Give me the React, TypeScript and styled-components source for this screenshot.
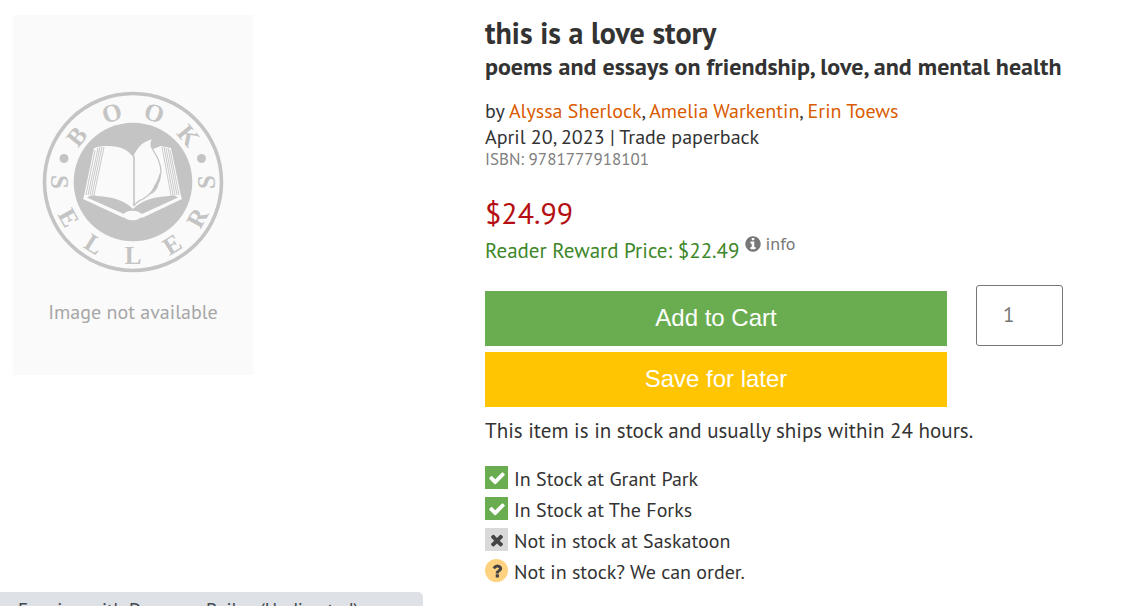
import React from 'react';
import styled, { createGlobalStyle } from 'styled-components';

const GlobalStyle = createGlobalStyle`
  *, *::before, *::after { box-sizing: border-box; }
  body {
    margin: 0;
    background: #fff;
    color: #333;
    font-family: 'PT Sans', Lato, 'Noto Sans', sans-serif;
    font-size: 20px;
    line-height: 26px;
  }
`;

const Page = styled.main`
  display: grid;
  grid-template-columns: minmax(0, 472fr) minmax(0, 578fr);
  padding: 15px 59px 20px 13px;
`;

const Cover = styled.figure`
  display: flex;
  flex-direction: column;
  align-items: center;
  width: 240px;
  height: 360px;
  margin: 0;
  padding-top: 76px;
  background: #fafafa;
`;

const Emblem = styled.svg`
  display: block;
  width: 182px;
  height: 182px;
`;

const CoverCaption = styled.figcaption`
  margin-top: 26px;
  color: #a6a6a6;
  font-size: 20px;
`;

const Details = styled.section`
  min-width: 0;
`;

const Title = styled.h1`
  margin: 0;
  font-size: 30px;
  line-height: 36px;
`;

const Subtitle = styled.h2`
  margin: 0 0 15px;
  font-size: 24px;
  line-height: 32px;
  white-space: nowrap;
`;

const Line = styled.p`
  margin: 0;
  white-space: nowrap;
`;

const AuthorLink = styled.a`
  color: #d95b00;
  text-decoration: none;
`;

const Isbn = styled.p`
  margin: 0;
  color: #808080;
  font-size: 17px;
  line-height: 18px;
`;

const Price = styled.p`
  margin: 26px 0 0;
  color: #b50e12;
  font-size: 30px;
  line-height: 38px;
`;

const RewardRow = styled.div`
  display: flex;
  gap: 5px;
  height: 36px;
  color: #3d8728;
  font-size: 21px;
  line-height: 38px;
  white-space: nowrap;
`;

const InfoLink = styled.a`
  display: inline-flex;
  align-items: center;
  gap: 3px;
  height: 24px;
  color: #777;
  font-size: 18px;
  line-height: 24px;
  text-decoration: none;
`;

const Purchase = styled.form`
  display: flex;
  align-items: flex-start;
  gap: 29px;
  margin-top: 17px;
`;

const Actions = styled.div`
  display: flex;
  flex: 1;
  flex-direction: column;
  gap: 6px;
  padding-top: 6px;
`;

const ActionButton = styled.button<{ $color: string }>`
  height: 55px;
  padding: 0 0 2px;
  border: 0;
  background: ${({ $color }) => $color};
  color: #fff;
  font-family: 'Liberation Sans', Arial, sans-serif;
  font-size: 24px;
  cursor: pointer;
`;

const Quantity = styled.input`
  width: 87px;
  height: 61px;
  padding: 0 26px 2px;
  border: 1px solid #767676;
  border-radius: 3px;
  background: #fff;
  color: #777;
  font: inherit;
  font-size: 21px;
`;

const Shipping = styled.p`
  margin: 11px 0 22px;
  font-size: 21px;
  white-space: nowrap;
`;

const StockList = styled.ul`
  display: flex;
  flex-direction: column;
  gap: 8px;
  margin: 0;
  padding: 0;
  list-style: none;
`;

const StockItem = styled.li`
  display: flex;
  align-items: flex-start;
  gap: 6px;
  height: 23px;
  line-height: 26px;
`;

const Badge = styled.span<{ $background: string; $color: string; $round?: boolean }>`
  display: flex;
  align-items: center;
  justify-content: center;
  width: 23px;
  height: 23px;
  border-radius: ${({ $round }) => ($round ? '50%' : '0')};
  background: ${({ $background }) => $background};
  color: ${({ $color }) => $color};
`;

const Glyph = styled.svg`
  display: block;
  fill: currentColor;
`;

const StatusBubble = styled.aside`
  position: fixed;
  bottom: 0;
  left: 0;
  width: 423px;
  height: 14px;
  padding: 6px 18px 0;
  overflow: hidden;
  border-top-right-radius: 5px;
  background: #dee1e5;
  color: #444950;
  font-size: 19px;
  line-height: 24px;
  white-space: nowrap;
`;

const glyphs = {
  check:
    'M1671 566q0 40-28 68l-724 724-136 136q-28 28-68 28t-68-28l-136-136-362-362q-28-28-28-68t28-68l136-136q28-28 68-28t68 28l294 295 656-657q28-28 68-28t68 28l136 136q28 28 28 68z',
  times:
    'M1490 1322q0 40-28 68l-136 136q-28 28-68 28t-68-28l-294-294-294 294q-28 28-68 28t-68-28l-136-136q-28-28-28-68t28-68l294-294-294-294q-28-28-28-68t28-68l136-136q28-28 68-28t68 28l294 294 294-294q28-28 68-28t68 28l136 136q28 28 28 68t-28 68l-294 294 294 294q28 28 28 68z',
  question:
    'M1088 1256v240q0 16-12 28t-28 12h-240q-16 0-28-12t-12-28v-240q0-16 12-28t28-12h240q16 0 28 12t12 28zm316-600q0 54-15.5 101t-35 76.5-55 59.5-57.5 43.5-61 35.5q-41 23-68.5 65t-27.5 67q0 17-12 32.5t-28 15.5h-240q-15 0-25.5-18.5t-10.5-37.5v-45q0-83 65-156.5t143-108.5q59-27 84-56t25-76q0-42-46.5-74t-107.5-32q-65 0-108 29-35 25-107 115-13 16-31 16-12 0-25-8l-164-125q-13-10-15.5-25t5.5-28q160-266 464-266 80 0 161 31t146 83 106 127.5 41 158.5z',
  info:
    'M1152 1376v-160q0-14-9-23t-23-9h-96v-512q0-14-9-23t-23-9h-320q-14 0-23 9t-9 23v160q0 14 9 23t23 9h96v320h-96q-14 0-23 9t-9 23v160q0 14 9 23t23 9h448q14 0 23-9t9-23zm-128-896v-160q0-14-9-23t-23-9h-192q-14 0-23 9t-9 23v160q0 14 9 23t23 9h192q14 0 23-9t9-23zm640 416q0 209-103 385.5t-279.5 279.5-385.5 103-385.5-103-279.5-279.5-103-385.5 103-385.5 279.5-279.5 385.5-103 385.5 103 279.5 279.5 103 385.5z',
};

function Icon({ name, size }: { name: keyof typeof glyphs; size: number }) {
  return (
    <Glyph viewBox="0 0 1792 1792" width={size} height={size} aria-hidden="true">
      <path d={glyphs[name]} />
    </Glyph>
  );
}

// Letters of the emblem: angle is measured from the top for BOOK, from the bottom for SELLERS.
const topLetters: [string, number][] = [['B', -51], ['O', -17], ['O', 17], ['K', 50]];
const bottomLetters: [string, number][] = [
  ['S', 90], ['E', 61], ['L', 32], ['L', 0], ['E', -32], ['R', -61], ['S', -90],
];

function BooksellersEmblem() {
  return (
    <Emblem viewBox="-91 -91 182 182" role="img" aria-label="Booksellers">
      <circle r="88.5" fill="none" stroke="#c4c4c4" strokeWidth="3.6" />
      <circle r="59.3" fill="#c4c4c4" />
      <circle cx="-69" cy="-23.5" r="4.5" fill="#c4c4c4" />
      <circle cx="68.5" cy="-23.5" r="4.5" fill="#c4c4c4" />
      <g
        fill="#c4c4c4"
        fontFamily="'Liberation Serif', serif"
        fontSize="25"
        fontWeight="700"
        textAnchor="middle"
      >
        {topLetters.map(([letter, angle]) => (
          <text key={angle} y="-64" transform={`rotate(${angle})`}>{letter}</text>
        ))}
        {bottomLetters.map(([letter, angle]) => (
          <text key={angle} y="82" transform={`rotate(${angle})`}>{letter}</text>
        ))}
      </g>
      <g fill="#fafafa">
        <path d="M-39 -34Q-33 -36 -28 -36Q-8 -37 0 -25Q5 -37 14 -41L20 -43Q16 -38 20 -33L28 -36L38 -34L48 14L49 17L10 35.5H-10L-50 17L-49 14Z" />
        <path
          fill="#c4c4c4"
          d="M-46 15.5Q-41 12 -36 14Q-12 15 0 27Q12 15 36 14Q41 12 45 15.5L9 32Q0 27 -9 32Z"
        />
        <ellipse cx="-0.5" cy="33.5" rx="9" ry="4.8" />
      </g>
      <g fill="none" stroke="#c4c4c4">
        <path strokeWidth="1.6" d="M1 -26V24" />
        <path strokeWidth="1.3" d="M20 -43Q16 -38 20 -32Q28 -20 28 -10Q26 0 21 6Q17 13 10 17Q3 20 1 24" />
        <path
          strokeWidth="0.9"
          d="M-38 -32L-47 13M-35 -34L-45 13M-33 -35L-43 13M-31 -35L-41 13M-29 -35L-39 13M29 -35L38 13M31 -35L40 13M33 -34L42 13M35 -34L44 13M37 -32L46 13"
        />
      </g>
      <path fill="#c4c4c4" d="M27 -9Q24 0 21 4Q21 9 15 14Q25 9 25.500 2Q29 -4 27 -9Z" />
    </Emblem>
  );
}

const authors = ['Alyssa Sherlock', 'Amelia Warkentin', 'Erin Toews'];

export default function App() {
  return (
    <>
      <GlobalStyle />
      <Page>
        <div>
          <Cover>
            <BooksellersEmblem />
            <CoverCaption>Image not available</CoverCaption>
          </Cover>
        </div>
        <Details>
          <Title>this is a love story</Title>
          <Subtitle>poems and essays on friendship, love, and mental health</Subtitle>
          <Line>
            by{' '}
            {authors.map((author, index) => (
              <React.Fragment key={author}>
                {index > 0 && ', '}
                <AuthorLink href="#">{author}</AuthorLink>
              </React.Fragment>
            ))}
          </Line>
          <Line>April 20, 2023 | Trade paperback</Line>
          <Isbn>ISBN: 9781777918101</Isbn>
          <Price>$24.99</Price>
          <RewardRow>
            <span>Reader Reward Price: $22.49</span>
            <InfoLink href="#">
              <Icon name="info" size={18} />
              info
            </InfoLink>
          </RewardRow>
          <Purchase onSubmit={(event) => event.preventDefault()}>
            <Actions>
              <ActionButton type="submit" $color="#6aad51">Add to Cart</ActionButton>
              <ActionButton type="button" $color="#ffc502">Save for later</ActionButton>
            </Actions>
            <Quantity type="text" inputMode="numeric" aria-label="Quantity" defaultValue="1" />
          </Purchase>
          <Shipping>This item is in stock and usually ships within 24 hours.</Shipping>
          <StockList>
            <StockItem>
              <Badge $background="#6aad51" $color="#fff"><Icon name="check" size={18} /></Badge>
              In Stock at Grant Park
            </StockItem>
            <StockItem>
              <Badge $background="#6aad51" $color="#fff"><Icon name="check" size={18} /></Badge>
              In Stock at The Forks
            </StockItem>
            <StockItem>
              <Badge $background="#d9d9d9" $color="#444"><Icon name="times" size={18} /></Badge>
              Not in stock at Saskatoon
            </StockItem>
            <StockItem>
              <Badge $background="#ffd280" $color="#444" $round><Icon name="question" size={18} /></Badge>
              Not in stock? We can order.
            </StockItem>
          </StockList>
        </Details>
      </Page>
      <StatusBubble>Evening with Donovan Bailey (Undirected)</StatusBubble>
    </>
  );
}
